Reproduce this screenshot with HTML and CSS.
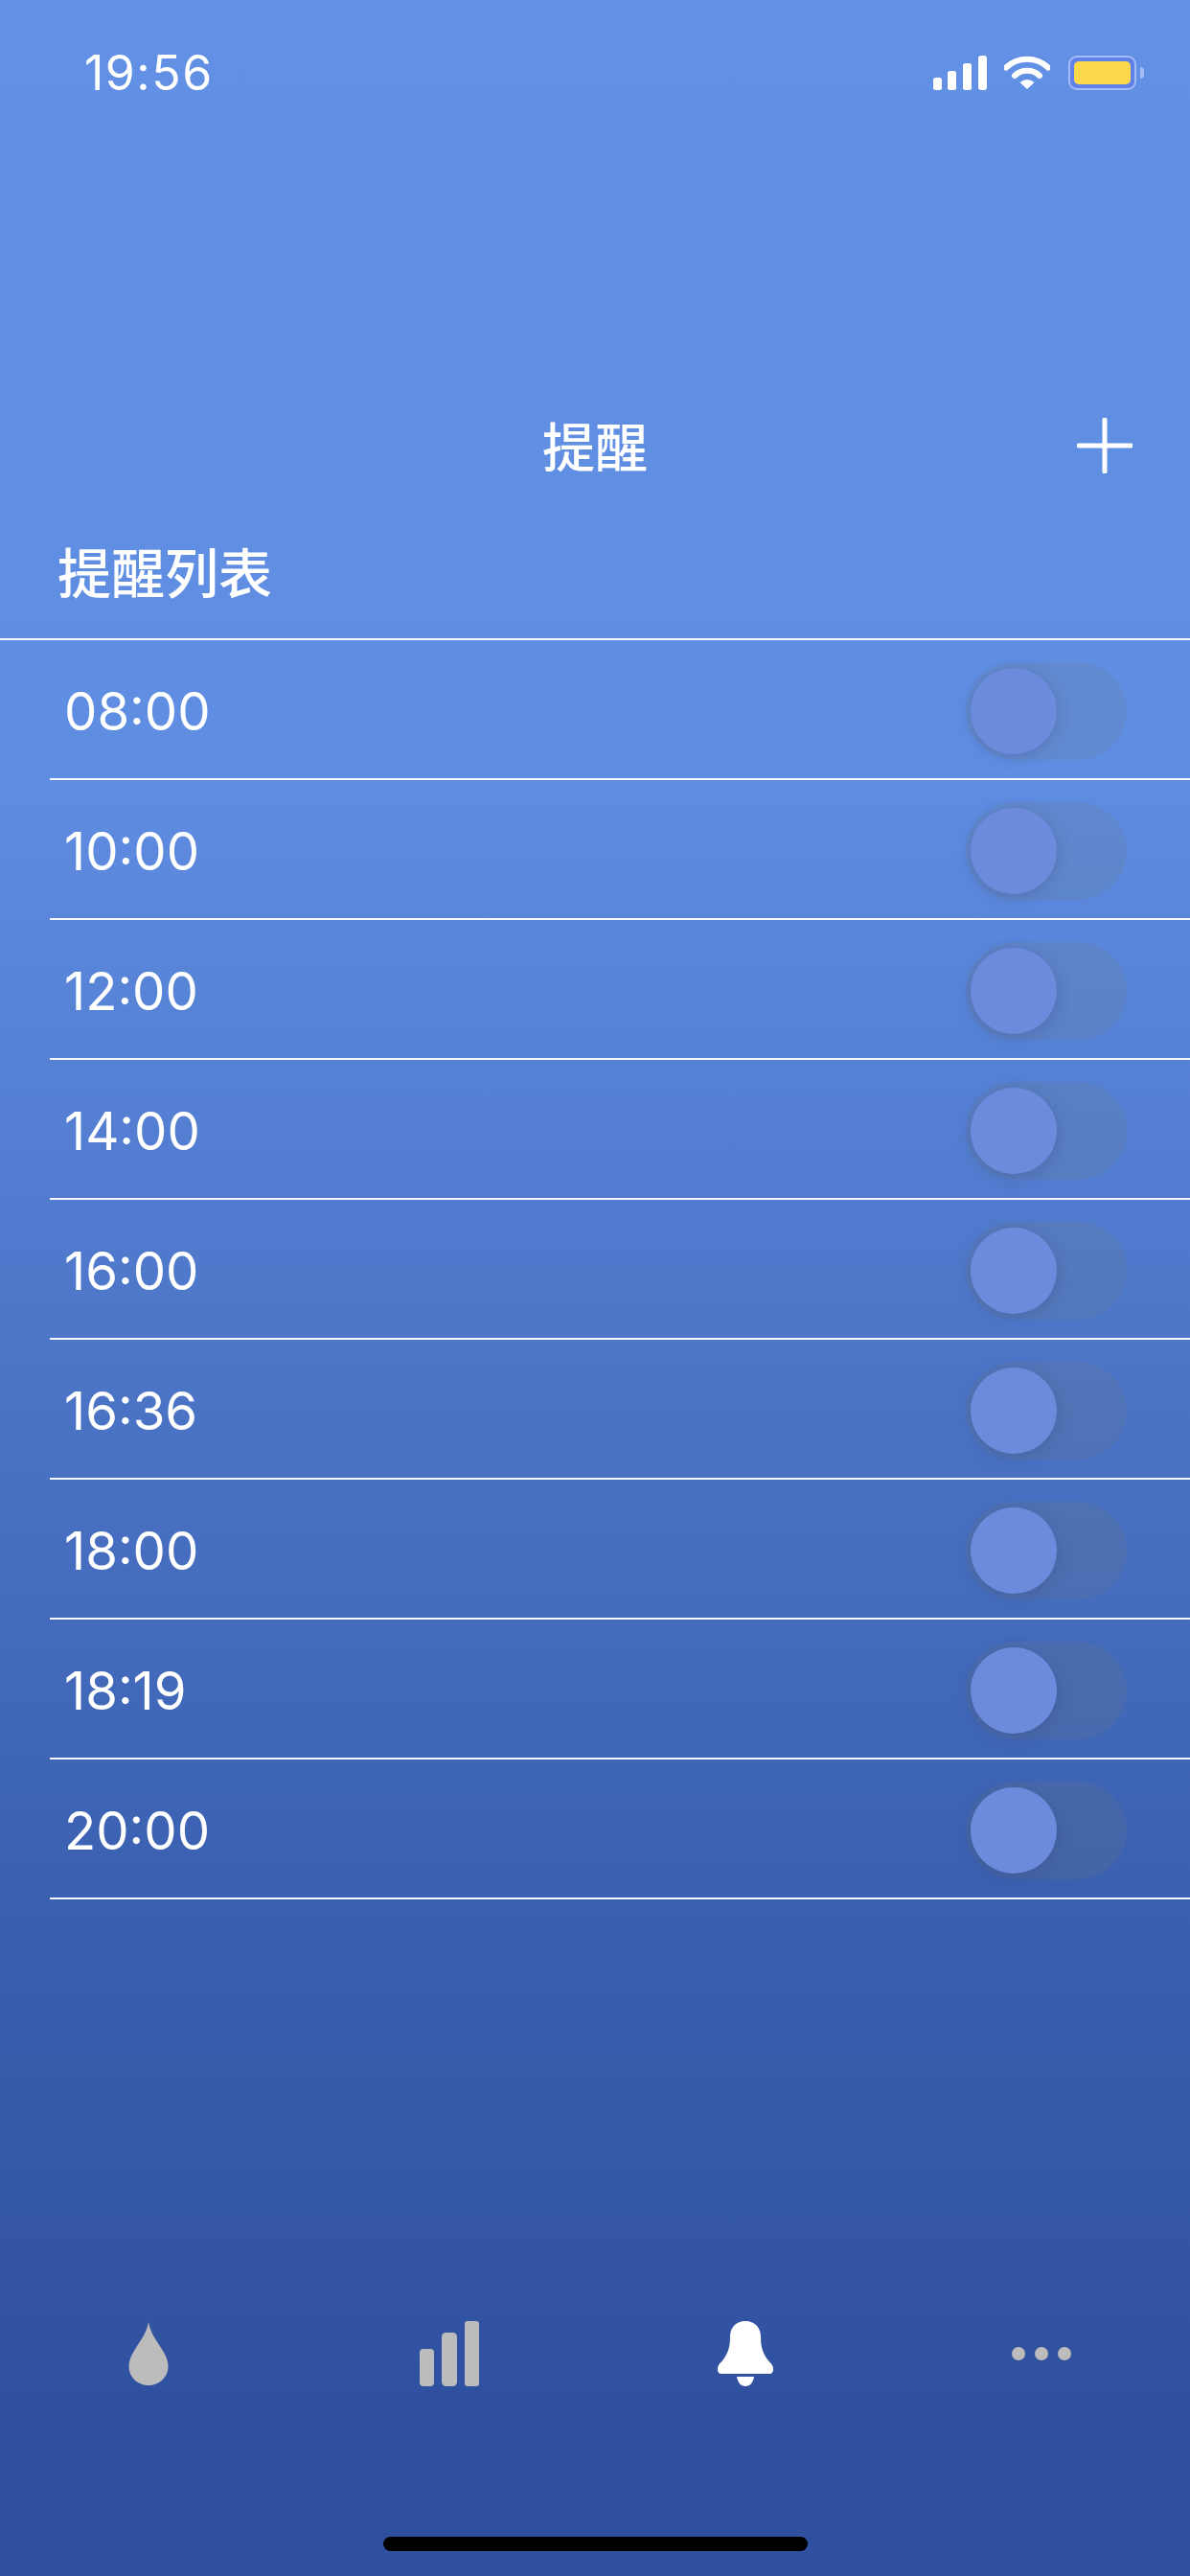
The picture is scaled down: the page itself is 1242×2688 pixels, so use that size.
FILE: index.html
```html
<!DOCTYPE html>
<html lang="zh-CN">
<head>
    <meta charset="UTF-8">
    <meta name="viewport" content="width=device-width, initial-scale=1.0">
    <title>提醒</title>
    <link rel="stylesheet" href="styles.css">
</head>
<body>
    <div class="screen">
        <div class="status-bar">
            <span class="status-time">19:56</span>
            <div class="status-icons">
                <svg class="icon-signal" width="56" height="36" viewBox="0 0 56 36">
                    <rect x="0" y="23" width="9" height="13" rx="2.5"/>
                    <rect x="15" y="16" width="9" height="20" rx="2.5"/>
                    <rect x="31" y="8" width="9" height="28" rx="2.5"/>
                    <rect x="47" y="0" width="9" height="36" rx="3"/>
                </svg>
                <svg class="icon-wifi" width="48" height="36" viewBox="0 0 48 36">
                    <path d="M2 12.5 A32 32 0 0 1 46 12.5" fill="none" stroke="#fff" stroke-width="6" stroke-linecap="round"/>
                    <path d="M11 21 A19 19 0 0 1 37 21" fill="none" stroke="#fff" stroke-width="6" stroke-linecap="round"/>
                    <path d="M24 35 L16.5 28 Q24 22 31.5 28 Z" fill="#fff"/>
                </svg>
                <div class="battery">
                    <div class="battery-fill"></div>
                </div>
                <div class="battery-nub"></div>
            </div>
        </div>

        <div class="nav">
            <h1 class="nav-title">提醒</h1>
            <svg class="nav-add" width="58" height="58" viewBox="0 0 58 58">
                <path d="M29 2 V56 M2 29 H56" stroke="#fff" stroke-width="5" stroke-linecap="round"/>
            </svg>
        </div>

        <h2 class="section-title">提醒列表</h2>

        <ul class="reminder-list">
            <li class="reminder"><span class="reminder-time">08:00</span><div class="toggle"><div class="toggle-knob"></div></div></li>
            <li class="reminder"><span class="reminder-time">10:00</span><div class="toggle"><div class="toggle-knob"></div></div></li>
            <li class="reminder"><span class="reminder-time">12:00</span><div class="toggle"><div class="toggle-knob"></div></div></li>
            <li class="reminder"><span class="reminder-time">14:00</span><div class="toggle"><div class="toggle-knob"></div></div></li>
            <li class="reminder"><span class="reminder-time">16:00</span><div class="toggle"><div class="toggle-knob"></div></div></li>
            <li class="reminder"><span class="reminder-time">16:36</span><div class="toggle"><div class="toggle-knob"></div></div></li>
            <li class="reminder"><span class="reminder-time">18:00</span><div class="toggle"><div class="toggle-knob"></div></div></li>
            <li class="reminder"><span class="reminder-time">18:19</span><div class="toggle"><div class="toggle-knob"></div></div></li>
            <li class="reminder"><span class="reminder-time">20:00</span><div class="toggle"><div class="toggle-knob"></div></div></li>
        </ul>

        <div class="tab-bar">
            <svg class="tab-icon" width="42" height="68" viewBox="0 0 42 68">
                <path d="M21 1 C23 13 30 21 36 31 C39 36 41.5 41 41.5 47 C41.5 59 32 67 21 67 C10 67 0.5 59 0.5 47 C0.5 41 3 36 6 31 C12 21 19 13 21 1 Z"/>
            </svg>
            <svg class="tab-icon tab-icon-bars" width="62" height="68" viewBox="0 0 62 68">
                <rect x="0" y="29" width="15" height="39" rx="4"/>
                <rect x="23" y="12" width="16" height="56" rx="4.5"/>
                <rect x="47" y="0" width="15" height="68" rx="3"/>
            </svg>
            <svg class="tab-icon tab-icon-active" width="60" height="68" viewBox="0 0 60 68">
                <path d="M30 0 C41 0 46 8 46 16 C46 27 48 33 53 40 C55 43 59 45 59 50 C59 54 57 55 55 55 L5 55 C3 55 1 54 1 50 C1 45 5 43 7 40 C12 33 14 27 14 16 C14 8 19 0 30 0 Z"/>
                <path d="M21 58 L39 58 C38 64 35 68 30 68 C25 68 22 64 21 58 Z"/>
            </svg>
            <div class="tab-dots">
                <span class="tab-dot"></span>
                <span class="tab-dot"></span>
                <span class="tab-dot"></span>
            </div>
        </div>

        <div class="home-indicator"></div>
    </div>
</body>
</html>
```

FILE: styles.css
```css
* {
    box-sizing: border-box;
}
html, body {
    margin: 0;
    padding: 0;
}
body {
    font-family: Inter, "Noto Sans CJK SC", sans-serif;
    color: #fff;
}
.screen {
    width: 1242px;
    height: 2688px;
    display: flex;
    flex-direction: column;
    overflow: hidden;
    background: linear-gradient(180deg, #6190e4 0, #5f8de2 800px, #4a72c4 1500px, #3a5fb0 2000px, #30519f 2500px, #2f509e 2688px);
}

/* status bar */
.status-bar {
    height: 152px;
    display: flex;
    align-items: center;
    justify-content: space-between;
    padding: 0 48px 0 88px;
}
.status-time {
    font-size: 50px;
    font-weight: 400;
    letter-spacing: 1.5px;
}
.status-icons {
    display: flex;
    align-items: center;
}
.icon-signal {
    fill: #fff;
}
.icon-wifi {
    margin: 0 19px 0 18px;
}
.battery {
    width: 71px;
    height: 36px;
    padding: 4px;
    border: 2px solid #a3bcf5;
    border-radius: 9px;
    background: #5f82ea;
}
.battery-fill {
    width: 100%;
    height: 100%;
    background: #fcd84a;
    border-radius: 5px;
}
.battery-nub {
    width: 4px;
    height: 12px;
    margin-left: 4px;
    background: #a3bcf5;
    border-radius: 0 6px 6px 0;
}

/* nav */
.nav {
    margin-top: 248px;
    height: 130px;
    display: flex;
    align-items: center;
    justify-content: center;
    position: relative;
}
.nav-title {
    margin: 0 0 5px;
    font-size: 55px;
    font-weight: 500;
}
.nav-add {
    position: absolute;
    left: 1124px;
    top: 36px;
}

.section-title {
    margin: 0;
    height: 138px;
    padding: 0 0 8px 60px;
    display: flex;
    align-items: center;
    font-size: 56px;
    font-weight: 500;
    border-bottom: 2px solid rgba(255,255,255,0.95);
}

/* list */
.reminder-list {
    list-style: none;
    margin: 0;
    padding: 0;
}
.reminder {
    height: 146px;
    margin-left: 52px;
    padding: 4px 66px 0 15px;
    display: flex;
    align-items: center;
    justify-content: space-between;
    border-bottom: 2px solid rgba(255,255,255,0.95);
}
.reminder-time {
    font-size: 54.5px;
    font-weight: 400;
}
.toggle {
    width: 168px;
    height: 102px;
    padding: 6px 5px;
    border-radius: 51px;
    background: rgba(110,125,120,0.17);
}
.toggle-knob {
    width: 90px;
    height: 90px;
    border-radius: 50%;
    background: #6c8bdc;
    box-shadow: 0 3px 16px rgba(50,60,100,0.24);
}

/* tabs */
.tab-bar {
    margin-top: auto;
    display: grid;
    grid-template-columns: repeat(4, 1fr);
    align-items: center;
    justify-items: center;
    height: 68px;
}
.tab-icon {
    fill: #bcbcbc;
}
.tab-icon-bars {
    margin-left: 6px;
}
.tab-icon-active {
    fill: #fff;
    margin-left: 3px;
}
.tab-dots {
    display: flex;
    gap: 10px;
}
.tab-dot {
    width: 14px;
    height: 14px;
    border-radius: 50%;
    background: #bcbcbc;
}
.home-indicator {
    width: 443px;
    height: 15px;
    margin: 157px auto 26px;
    background: #000;
    border-radius: 8px;
}
```
